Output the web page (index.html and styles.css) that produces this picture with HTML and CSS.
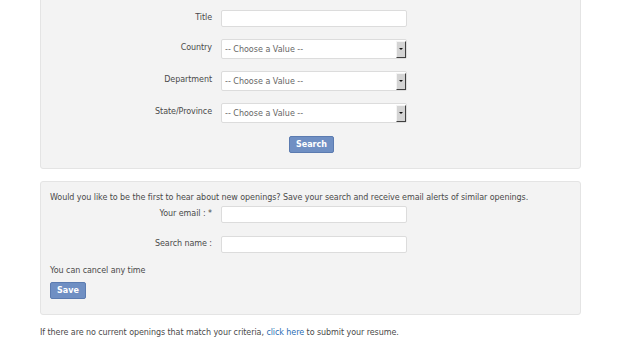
FILE: index.html
```html
<!DOCTYPE html>
<html lang="en">
<head>
    <meta charset="UTF-8" />
    <title>Job Search</title>
    <link rel="stylesheet" href="styles.css">
</head>
<body>
    <div class="page">
        <form class="panel search-panel">
            <div class="row">
                <label class="label">Title</label>
                <input class="field" type="text" />
            </div>
            <div class="row">
                <label class="label">Country</label>
                <span class="select"><select><option>-- Choose a Value --</option></select></span>
            </div>
            <div class="row">
                <label class="label">Department</label>
                <span class="select"><select><option>-- Choose a Value --</option></select></span>
            </div>
            <div class="row">
                <label class="label">State/Province</label>
                <span class="select"><select><option>-- Choose a Value --</option></select></span>
            </div>
            <div class="row row-submit">
                <span class="label"></span>
                <div><button type="button" class="btn btn-search">Search</button></div>
            </div>
        </form>

        <form class="panel alert-panel">
            <p class="intro">Would you like to be the first to hear about new openings? Save your search and receive email alerts of similar openings.</p>
            <div class="row">
                <label class="label">Your email : *</label>
                <input class="field" type="text" />
            </div>
            <div class="row">
                <label class="label">Search name :</label>
                <input class="field" type="text" />
            </div>
            <p class="cancel">You can cancel any time</p>
            <button type="button" class="btn">Save</button>
        </form>

        <p class="footer">If there are no current openings that match your criteria, <a href="#">click here</a> to submit your resume.</p>
    </div>
</body>
</html>
```

FILE: styles.css
```css
:root {
    --panel-bg: #f3f3f3;
    --panel-border: #e4e4e4;
    --text: #4a4a4a;
    --btn-bg: #6f8fc3;
    --btn-border: #5b7bb0;
    --link: #2b6cb3;
}

body {
    margin: 0;
    background: #fff;
    font-family: "DejaVu Sans", Verdana, sans-serif;
    font-size: 8px;
    letter-spacing: -0.07px;
    color: var(--text);
}

.page {
    width: 541px;
    margin: -6px 0 0 40px;
}

.panel {
    background: var(--panel-bg);
    border: 1px solid var(--panel-border);
    border-radius: 3px;
    box-sizing: border-box;
}

.search-panel {
    padding: 15px 0 15px;
}

.alert-panel {
    margin-top: 12px;
    padding: 11px 9px 15px;
}

.row {
    display: grid;
    grid-template-columns: 171px 186px;
    column-gap: 9px;
    align-items: center;
    margin-bottom: 12px;
}

.search-panel .row-submit {
    margin-top: 13px;
}

.alert-panel .row {
    grid-template-columns: 162px 186px;
    margin-bottom: 13px;
}

.row:last-child {
    margin-bottom: 0;
}

.label {
    text-align: right;
    padding-bottom: 3px;
}

.field {
    box-sizing: border-box;
    width: 186px;
    height: 17px;
    margin: 0;
    border: 1px solid #dcdcdc;
    border-radius: 2px;
    background: #fff;
}

.select {
    position: relative;
    display: block;
    width: 186px;
    height: 20px;
}

.select select {
    appearance: none;
    -webkit-appearance: none;
    box-sizing: border-box;
    width: 100%;
    height: 20px;
    margin: 0;
    padding: 0 0 0 3px;
    border: 1px solid #dcdcdc;
    border-radius: 2px;
    background: #fff;
    font-family: "DejaVu Sans", Verdana, sans-serif;
    font-size: 8px;
    color: #666;
}

/* old style dropdown button */
.select::after {
    content: "";
    position: absolute;
    right: 1px;
    top: 2px;
    width: 8px;
    height: 15px;
    background: #d4d4d4;
    border-left: 1px solid #f4f4f4;
    border-top: 1px solid #f4f4f4;
    border-right: 1px solid #404040;
    border-bottom: 1px solid #404040;
    pointer-events: none;
}

.select::before {
    content: "";
    position: absolute;
    right: 4px;
    top: 9px;
    border-left: 2px solid transparent;
    border-right: 2px solid transparent;
    border-top: 2px solid #111;
    z-index: 1;
    pointer-events: none;
}

.btn {
    display: inline-block;
    height: 17px;
    padding: 0 6px;
    border: 1px solid var(--btn-border);
    border-radius: 2px;
    background: var(--btn-bg);
    color: #fff;
    font-family: "DejaVu Sans", Verdana, sans-serif;
    font-size: 8px;
    font-weight: bold;
    cursor: pointer;
}

.btn-search {
    margin-left: 68px;
}

.intro {
    margin: 0 0 4px;
}

.cancel {
    margin: 12px 0 7px;
}

.footer {
    margin: 13px 0 0;
}

.footer a {
    color: var(--link);
    text-decoration: none;
}
```
